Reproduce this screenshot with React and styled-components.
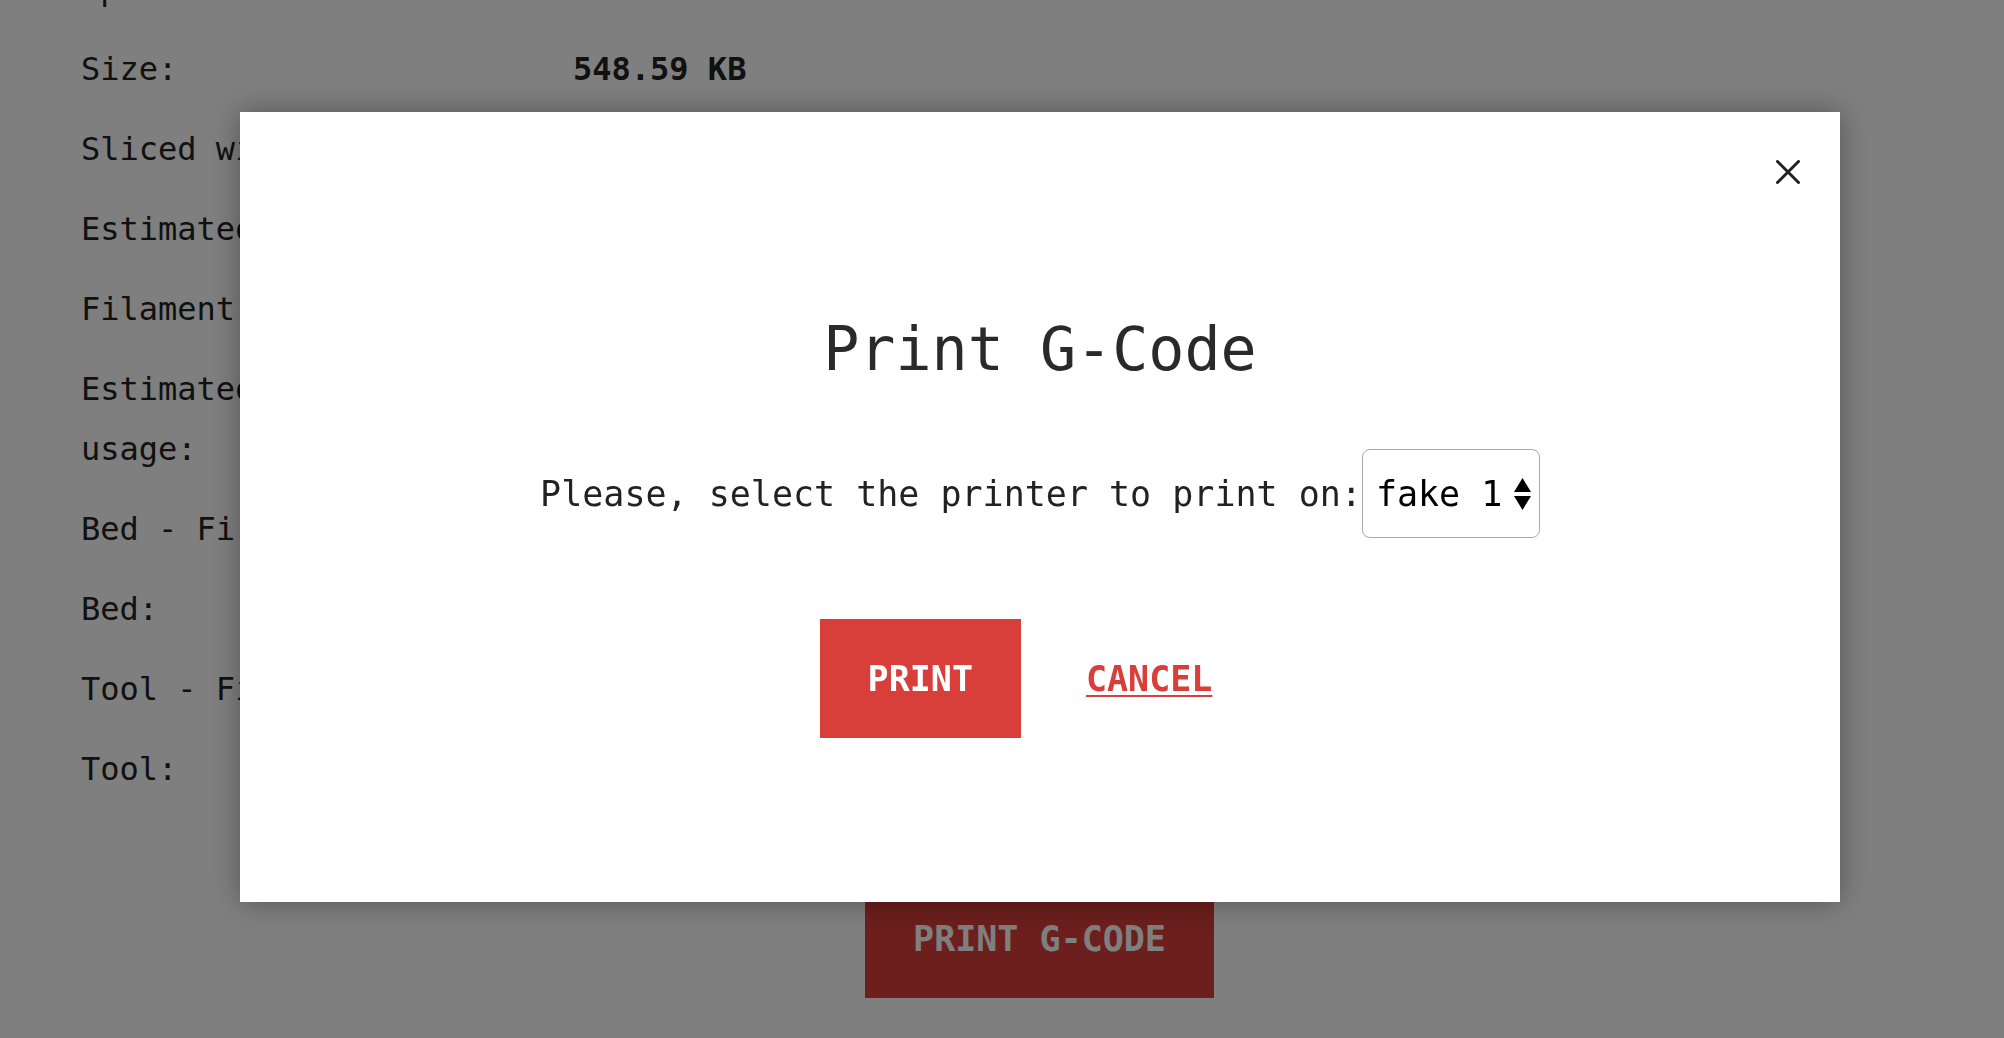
import React from 'react';
import styled, { createGlobalStyle } from 'styled-components';

const GlobalStyle = createGlobalStyle`
  html, body {
    margin: 0;
    padding: 0;
    background: #ffffff;
    overflow: hidden;
  }
  body {
    font-family: "DejaVu Sans Mono", "Liberation Mono", monospace;
    color: #222222;
  }
`;

const Page = styled.div`
  margin-top: -41px;
  padding-left: 81px;
  display: flex;
  flex-direction: column;
`;

const InfoGrid = styled.div`
  display: grid;
  grid-template-columns: 470px auto;
  column-gap: 22px;
  row-gap: 20px;
  font-size: 32px;
  line-height: 60px;
`;

const Label = styled.div`
  color: #222222;
`;

const Value = styled.div`
  color: #222222;
  font-weight: ${p => (p.$bold ? 'bold' : 'normal')};
`;

const ActionRow = styled.div`
  display: flex;
  justify-content: center;
  margin-top: 80px;
  padding-right: 6px;
`;

const RedButton = styled.button`
  height: 119px;
  padding: 0 48px;
  border: none;
  border-radius: 0;
  background: #d83e3a;
  color: #ffffff;
  font-family: "DejaVu Sans Mono", "Liberation Mono", monospace;
  font-size: 35px;
  font-weight: bold;
  cursor: pointer;
`;

const FlatButton = styled.button`
  height: 119px;
  padding: 0 48px;
  border: none;
  background: transparent;
  color: #d83e3a;
  font-family: "DejaVu Sans Mono", "Liberation Mono", monospace;
  font-size: 35px;
  font-weight: bold;
  text-decoration: underline;
  text-decoration-thickness: 2px;
  text-underline-offset: 4px;
  cursor: pointer;
`;

const Overlay = styled.div`
  position: fixed;
  inset: 0;
  background: rgba(0, 0, 0, 0.5);
  display: flex;
  justify-content: center;
  align-items: flex-start;
  padding-left: 76px;
  padding-top: 112px;
  box-sizing: border-box;
`;

const Modal = styled.div`
  position: relative;
  width: 1600px;
  height: 790px;
  box-sizing: border-box;
  background: #ffffff;
  box-shadow: 0 0 28px rgba(0, 0, 0, 0.35);
  display: flex;
  flex-direction: column;
  align-items: center;
  padding-top: 201px;
`;

const CloseButton = styled.button`
  position: absolute;
  top: 48px;
  right: 40px;
  width: 24px;
  height: 24px;
  padding: 0;
  border: none;
  background: transparent;
  cursor: pointer;
  display: flex;

  svg {
    width: 24px;
    height: 24px;
  }
`;

const Title = styled.h2`
  margin: 0 0 64px;
  font-size: 60px;
  line-height: 72px;
  font-weight: normal;
  color: #2a2a2a;
`;

const PromptRow = styled.div`
  display: flex;
  align-items: center;
  font-size: 35px;
  color: #222222;
`;

const SelectWrap = styled.div`
  position: relative;
  display: flex;
`;

const PrinterSelect = styled.select`
  appearance: none;
  -webkit-appearance: none;
  width: 178px;
  height: 89px;
  box-sizing: border-box;
  padding: 0 34px 0 13px;
  border: 1px solid #a9a9a9;
  border-radius: 8px;
  background: #ffffff;
  color: #000000;
  font-family: "DejaVu Sans Mono", "Liberation Mono", monospace;
  font-size: 35px;
`;

const SelectArrows = styled.svg`
  position: absolute;
  right: 9px;
  top: 29px;
  width: 17px;
  height: 32px;
  pointer-events: none;
`;

const ModalActions = styled.div`
  display: flex;
  gap: 17px;
  margin-top: 81px;
`;

const rows = [
  ['Uploaded:', '2024-01-15 10:33:12', false],
  ['Size:', '548.59 KB', true],
  ['Sliced with:', 'PrusaSlicer 2.7.1', false],
  ['Estimated printing time:', '1h 23m', false],
  ['Filament used:', '4.12 m', false],
  ['Estimated filament usage:', '12.31 g', false],
  ['Bed - First layer:', '60 °C', false],
  ['Bed:', '60 °C', false],
  ['Tool - First layer:', '215 °C', false],
  ['Tool:', '210 °C', false],
];

export default function App() {
  return (
    <>
      <GlobalStyle />
      <Page>
        <InfoGrid>
          {rows.map(([label, value, bold]) => (
            <React.Fragment key={label}>
              <Label>{label}</Label>
              <Value $bold={bold}>{value}</Value>
            </React.Fragment>
          ))}
        </InfoGrid>
        <ActionRow>
          <RedButton>PRINT G-CODE</RedButton>
        </ActionRow>
      </Page>

      <Overlay>
        <Modal>
          <CloseButton aria-label="Close">
            <svg viewBox="0 0 24 24" fill="none" stroke="#222" strokeWidth="3" strokeLinecap="round">
              <path d="M1.5 1.5 22.5 22.5M22.5 1.5 1.5 22.5" />
            </svg>
          </CloseButton>
          <Title>Print G-Code</Title>
          <PromptRow>
            <span>Please, select the printer to print on:</span>
            <SelectWrap>
              <PrinterSelect defaultValue="fake1">
                <option value="fake1">fake 1</option>
                <option value="fake2">fake 2</option>
              </PrinterSelect>
              <SelectArrows viewBox="0 0 17 32">
                <path d="M8.5 0 17 14H0Z M0 18h17L8.5 32Z" fill="#000" />
              </SelectArrows>
            </SelectWrap>
          </PromptRow>
          <ModalActions>
            <RedButton>PRINT</RedButton>
            <FlatButton>CANCEL</FlatButton>
          </ModalActions>
        </Modal>
      </Overlay>
    </>
  );
}
